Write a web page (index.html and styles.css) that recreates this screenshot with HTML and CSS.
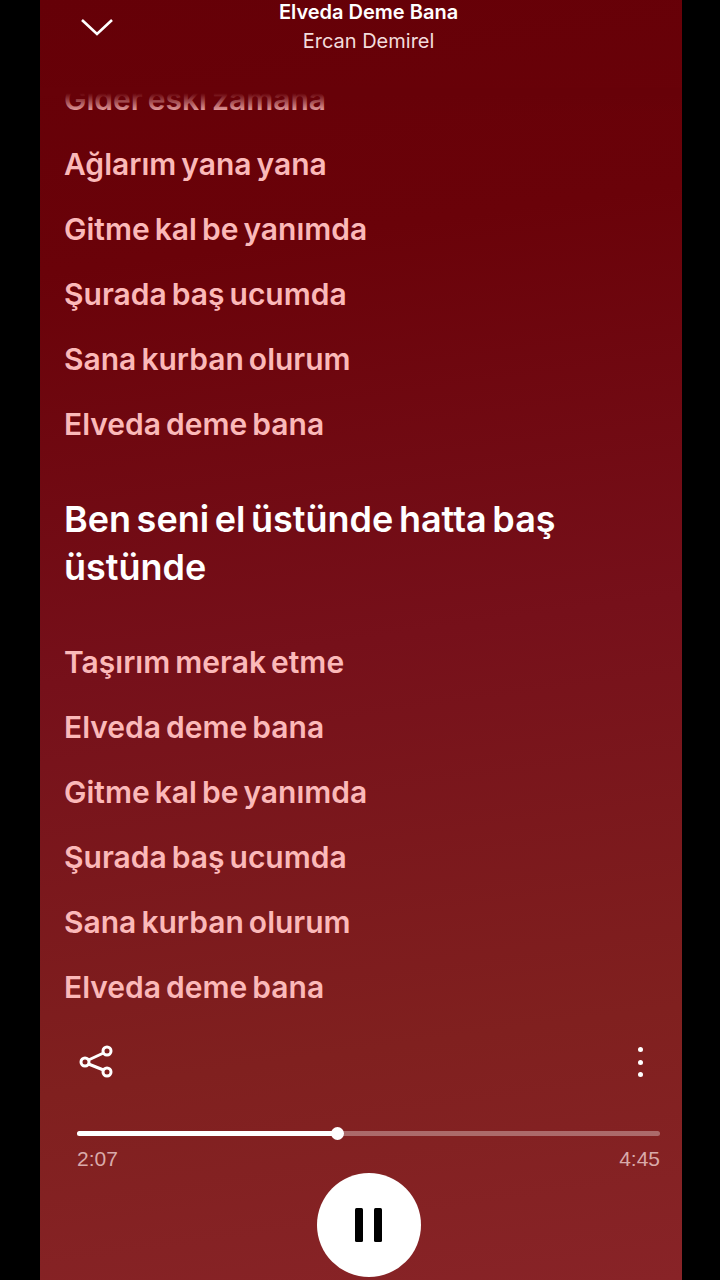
FILE: index.html
```html
<!DOCTYPE html>
<html lang="en">
<head>
  <meta charset="UTF-8">
  <meta name="viewport" content="width=device-width, initial-scale=1.0">
  <title>Elveda Deme Bana</title>
  <link rel="stylesheet" href="styles.css">
</head>
<body>
  <div class="screen">
    <div class="top-bar">
      <svg class="chevron" width="34" height="20" viewBox="0 0 34 20"><path d="M2 3 L17 17 L32 3" fill="none" stroke="#fff" stroke-width="2.6"/></svg>
      <div class="song-title">Elveda Deme Bana</div>
      <div class="song-artist">Ercan Demirel</div>
    </div>

    <div class="lyrics">
      <div class="line">Gider eski zamana</div>
      <div class="line">Ağlarım yana yana</div>
      <div class="line">Gitme kal be yanımda</div>
      <div class="line">Şurada baş ucumda</div>
      <div class="line">Sana kurban olurum</div>
      <div class="line">Elveda deme bana</div>
      <div class="line active">Ben seni el üstünde hatta baş üstünde</div>
      <div class="line">Taşırım merak etme</div>
      <div class="line">Elveda deme bana</div>
      <div class="line">Gitme kal be yanımda</div>
      <div class="line">Şurada baş ucumda</div>
      <div class="line">Sana kurban olurum</div>
      <div class="line">Elveda deme bana</div>
    </div>

    <div class="actions">
      <svg width="36" height="34" viewBox="0 0 36 34" fill="none" stroke="#fff" stroke-width="3">
        <path d="M10.5 15 L25.5 8 M10.5 19 L25.5 25"/>
        <circle cx="7" cy="17" r="4"/>
        <circle cx="29" cy="6" r="4"/>
        <circle cx="29" cy="27" r="4"/>
      </svg>
      <div class="dots"><span></span><span></span><span></span></div>
    </div>

    <div class="progress-bar">
      <div class="progress" style="width: 44.6%"></div>
      <div class="knob"></div>
    </div>
    <div class="times">
      <span>2:07</span>
      <span>4:45</span>
    </div>

    <button class="play">
      <svg width="28" height="34" viewBox="0 0 28 34"><rect x="0" y="0" width="8" height="34" rx="1.5"/><rect x="19" y="0" width="8" height="34" rx="1.5"/></svg>
    </button>
  </div>
</body>
</html>
```
FILE: styles.css
```css
body {
  margin: 0;
  padding: 0;
  height: 1280px;
  background: #000;
  font-family: Inter, "Noto Sans", sans-serif;
  color: #fff;
  overflow: hidden;
}

.screen {
  width: 642px;
  height: 1280px;
  margin-left: 40px;
  display: flex;
  flex-direction: column;
  background: linear-gradient(172deg, #650007 0%, #6a0209 20%, #76101a 50%, #80201f 80%, #882327 100%);
}

.top-bar {
  position: relative;
  height: 88px;
  flex: none;
  text-align: center;
  padding-left: 15px;
}

.chevron {
  position: absolute;
  left: 40px;
  top: 17px;
}

.song-title {
  font-size: 20px;
  font-weight: 600;
  line-height: 24px;
}

.song-artist {
  font-size: 20px;
  line-height: 34px;
  color: #f3dcdc;
}

.lyrics {
  position: relative;
  height: 932px;
  flex: none;
  overflow: hidden;
  display: flex;
  flex-direction: column;
  justify-content: flex-end;
  padding: 0 24px;
  box-sizing: border-box;
}

.lyrics:before {
  content: "";
  position: absolute;
  top: 0;
  left: 0;
  right: 0;
  height: 26px;
  background: linear-gradient(#670108 20%, rgba(103, 1, 8, 0));
}

.line {
  flex: none;
  font-size: 30px;
  font-weight: 600;
  line-height: 65px;
  word-spacing: -2.5px;
  color: #fbb9b9;
}

.line.active {
  font-size: 36px;
  line-height: 48px;
  word-spacing: -3.5px;
  color: #fff;
  margin: 38px 0 39px;
}

.actions {
  flex: none;
  height: 34px;
  margin-top: 25px;
  padding: 0 39px 0 38px;
  display: flex;
  justify-content: space-between;
  align-items: center;
}

.dots {
  display: flex;
  flex-direction: column;
  gap: 7.5px;
}

.dots span {
  width: 5px;
  height: 5px;
  border-radius: 50%;
  background: #fff;
}

.progress-bar {
  position: relative;
  flex: none;
  height: 5px;
  margin: 52px 22px 0 37px;
  background: rgba(255, 255, 255, 0.33);
  border-radius: 3px;
}

.progress {
  height: 100%;
  background: #fff;
  border-radius: 3px;
}

.knob {
  position: absolute;
  left: 254px;
  top: -4px;
  width: 13px;
  height: 13px;
  border-radius: 50%;
  background: #fff;
}

.times {
  flex: none;
  display: flex;
  justify-content: space-between;
  margin: 12px 22px 0 37px;
  font-family: "Liberation Sans", Arial, sans-serif;
  font-size: 21px;
  line-height: 22px;
  color: #d9aaaa;
}

.play {
  flex: none;
  align-self: center;
  width: 104px;
  height: 104px;
  margin-top: 3px;
  margin-left: 15px;
  padding: 0;
  border: none;
  border-radius: 50%;
  background: #fff;
  display: flex;
  align-items: center;
  justify-content: center;
}
```
